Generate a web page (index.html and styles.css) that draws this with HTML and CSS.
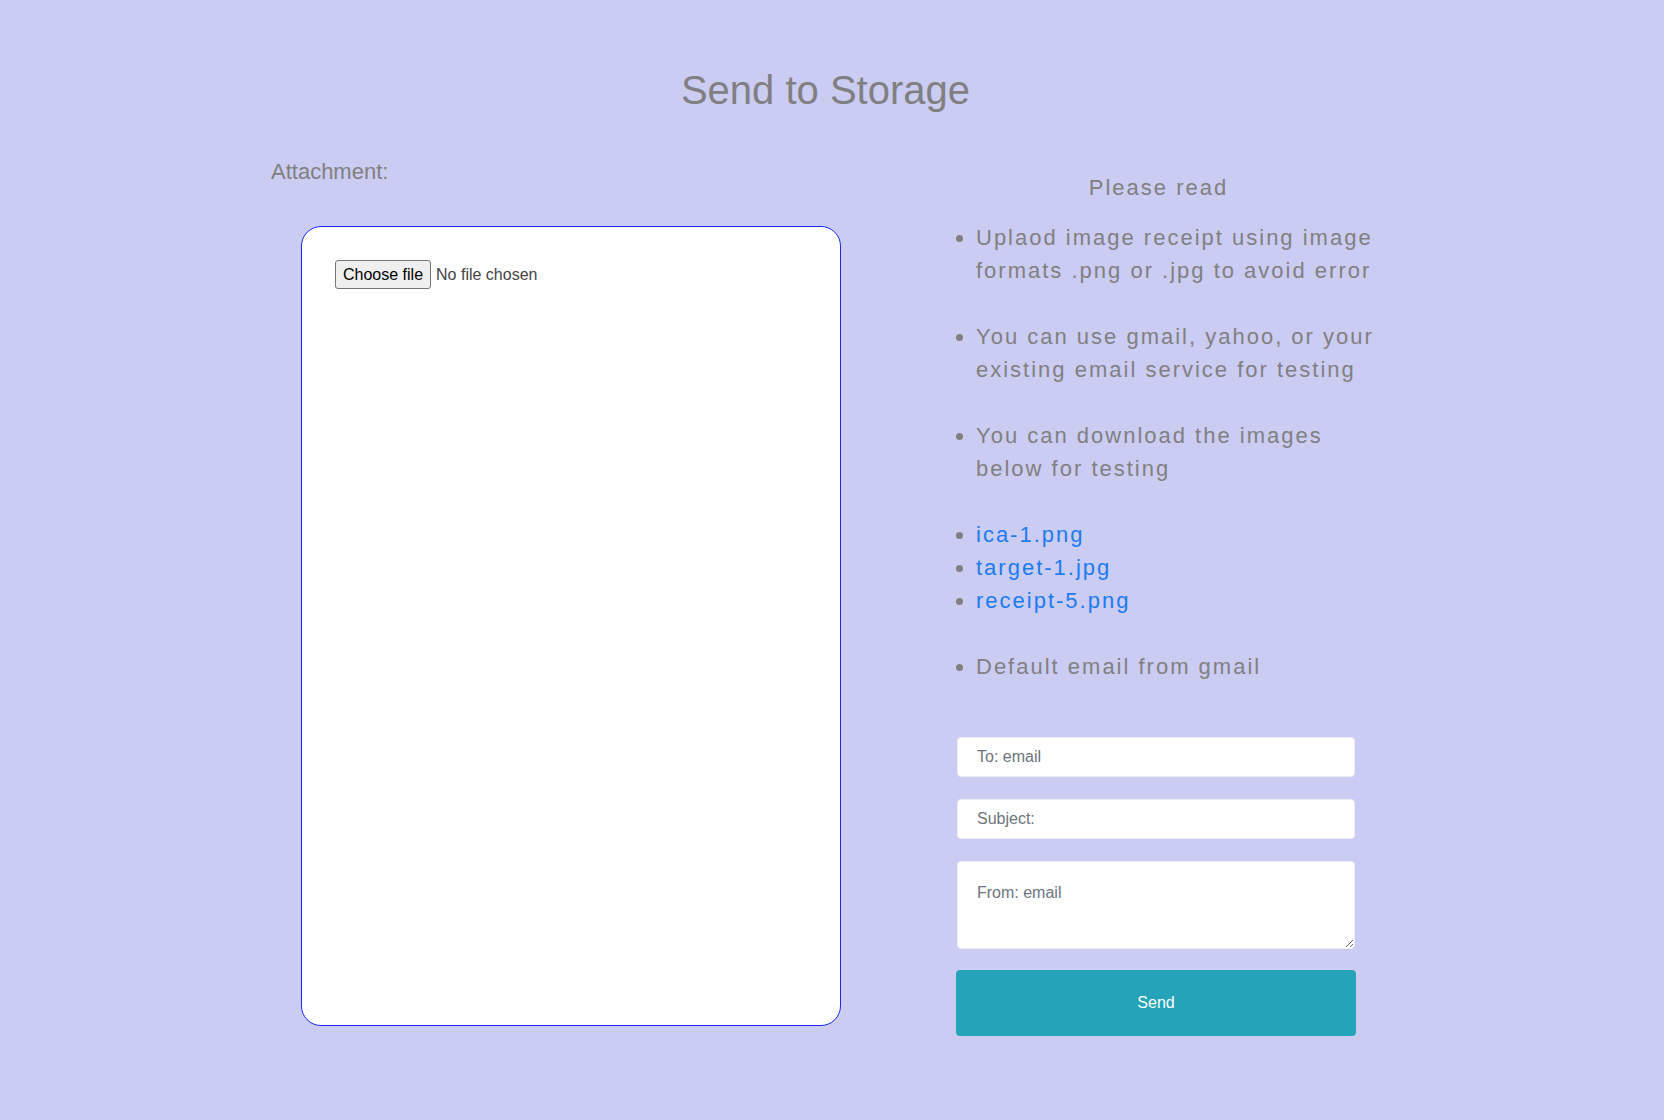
FILE: index.html
```html
<!DOCTYPE html>
<html lang="en">
<head>
<meta charset="utf-8">
<title>Send to Storage</title>
<link rel="stylesheet" href="styles.css">
</head>
<body>
<div class="page">
  <h1 class="title">Send to Storage</h1>
  <div class="row">
    <div class="left">
      <label class="attach-label" for="file">Attachment:</label>
      <div class="dropbox">
        <div class="file-control">
          <input id="file" class="file-input" type="file">
          <label class="file-btn" for="file">Choose file</label>
          <span class="file-name">No file chosen</span>
        </div>
      </div>
    </div>
    <div class="right">
      <p class="read-title">Please read</p>
      <ul class="notes">
        <li class="spaced">Uplaod image receipt using image formats .png or .jpg to avoid error</li>
        <li class="spaced">You can use gmail, yahoo, or your existing email service for testing</li>
        <li class="spaced">You can download the images below for testing</li>
        <li><a class="dl" href="#">ica-1.png</a></li>
        <li><a class="dl" href="#">target-1.jpg</a></li>
        <li class="spaced"><a class="dl" href="#">receipt-5.png</a></li>
        <li>Default email from gmail</li>
      </ul>
      <form class="mail-form">
        <input class="field" type="email" placeholder="To: email">
        <input class="field" type="text" placeholder="Subject:">
        <textarea class="field area" placeholder="From: email"></textarea>
        <button class="send" type="button">Send</button>
      </form>
    </div>
  </div>
</div>
</body>
</html>
```
FILE: styles.css
```css
html, body {
  margin: 0;
  padding: 0;
}
body {
  background: #cbccf2;
  font-family: "Liberation Sans", Arial, Helvetica, sans-serif;
  color: #808080;
  min-height: 1120px;
}
.page {
  padding-top: 67px;
}
.title {
  margin: 0;
  padding-right: 13px;
  font-size: 40px;
  line-height: 46px;
  font-weight: normal;
  text-align: center;
  color: #808080;
}
.row {
  display: flex;
  margin-top: 46px;
  margin-left: 271px;
  gap: 95px;
}
.left {
  width: 570px;
}
.attach-label {
  display: block;
  font-size: 22px;
  line-height: 25px;
  color: #808080;
}
.dropbox {
  box-sizing: border-box;
  margin-top: 42px;
  margin-left: 30px;
  width: 540px;
  height: 800px;
  padding: 33px;
  background: #fff;
  border: 1px solid #1a28f7;
  border-radius: 20px;
}
.file-control {
  display: flex;
  align-items: center;
  font-size: 16px;
}
.file-input {
  position: absolute;
  width: 1px;
  height: 1px;
  opacity: 0;
  overflow: hidden;
}
.file-btn {
  box-sizing: border-box;
  height: 29px;
  padding: 0 7px;
  display: flex;
  align-items: center;
  font-size: 16px;
  color: #000;
  background: #efefef;
  border: 1px solid #767676;
  border-radius: 3px;
}
.file-name {
  margin-left: 5px;
  color: #444;
}
.right {
  width: 450px;
}
.read-title {
  margin: 12px 0 0;
  padding-right: 5px;
  font-size: 22px;
  line-height: 33px;
  letter-spacing: 2px;
  text-align: center;
  color: #808080;
}
.notes {
  margin: 17px 0 0;
  padding-left: 40px;
  font-size: 22px;
  line-height: 33px;
  letter-spacing: 2px;
  color: #808080;
}
.notes .spaced {
  margin-bottom: 33px;
}
.dl {
  color: #1a7bf2;
  text-decoration: none;
}
.mail-form {
  margin-top: 54px;
  margin-left: 20px;
  width: 400px;
  display: flex;
  flex-direction: column;
}
.field {
  box-sizing: border-box;
  display: block;
  width: 398px;
  height: 40px;
  margin: 0 1px 22px;
  padding: 0 19px;
  font-family: "Liberation Sans", Arial, Helvetica, sans-serif;
  font-size: 16px;
  color: #495057;
  background: #fff;
  border: 1px solid #ececf4;
  border-radius: 4px;
  outline: none;
}
.field::placeholder {
  color: #6c757d;
}
.area {
  height: 88px;
  margin-bottom: 21px;
  padding-top: 22px;
  line-height: 18px;
}
.send {
  width: 400px;
  height: 66px;
  padding: 0;
  font-family: "Liberation Sans", Arial, Helvetica, sans-serif;
  font-size: 16px;
  color: #fff;
  background: #24a3b9;
  border: none;
  border-radius: 4px;
}
```
